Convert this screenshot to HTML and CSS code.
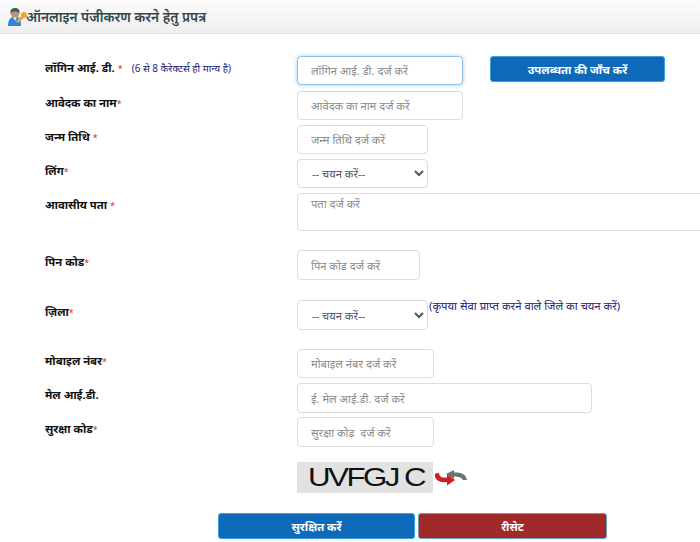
FILE: index.html

```html
<!DOCTYPE html>
<html lang="hi">
<head>
    <meta charset="UTF-8">
    <meta name="viewport" content="width=device-width, initial-scale=1.0">
    <title>ऑनलाइन पंजीकरण</title>
    <link rel="stylesheet" href="styles.css">
</head>
<body>

    <!-- Page heading -->
    <div class="page-head">
        <svg class="head-icon" width="19" height="18" viewBox="0 0 19 18">
            <path d="M0 18 C0 12 3 9 5 9 L9 9 C12 9 13 12 13 18 Z" fill="#2f86d6"/>
            <path d="M5 9 L7 13 L9 9 Z" fill="#e8eef4"/>
            <circle cx="7" cy="5" r="4.5" fill="#b99379"/>
            <path d="M2.5 5 C2 1 5 0 7 0 C10 0 12 2 11.5 5 C9 3 5 3 2.5 5 Z" fill="#4a5a5c"/>
            <circle cx="16" cy="7" r="3" fill="#eaa935"/>
            <path d="M14.5 7 L8 13 L10 15 L17 9 Z" fill="#eaa935"/>
        </svg>
        <span class="head-text">ऑनलाइन पंजीकरण करने हेतु प्रपत्र</span>
    </div>

    <form class="reg-form">
        <div class="row row-login">
            <label class="lbl">लॉगिन आई. डी. <span class="req">*</span><small class="hint">(6 से 8 कैरेक्टर्स ही मान्य है)</small></label>
            <input type="text" class="field field-focus w-166" placeholder="लॉगिन आई. डी. दर्ज करें">
            <button type="button" class="btn btn-check">उपलब्धता की जाँच करें</button>
        </div>
        <div class="row row-name">
            <label class="lbl">आवेदक का नाम<span class="req">*</span></label>
            <input type="text" class="field w-166" placeholder="आवेदक का नाम दर्ज करें">
        </div>
        <div class="row row-name">
            <label class="lbl">जन्म तिथि <span class="req">*</span></label>
            <input type="text" class="field w-131" placeholder="जन्म तिथि दर्ज करें">
        </div>
        <div class="row row-name">
            <label class="lbl">लिंग<span class="req">*</span></label>
            <select class="field select w-131"><option>-- चयन करें--</option></select>
        </div>
        <div class="row row-address">
            <label class="lbl">आवासीय पता <span class="req">*</span></label>
            <textarea class="field area" placeholder="पता दर्ज करें"></textarea>
        </div>
        <div class="row row-pin">
            <label class="lbl">पिन कोड<span class="req">*</span></label>
            <input type="text" class="field tall w-123" placeholder="पिन कोड दर्ज करें">
        </div>
        <div class="row row-district">
            <label class="lbl">ज़िला<span class="req">*</span></label>
            <select class="field select tall w-131"><option>-- चयन करें--</option></select>
            <span class="note">(कृपया सेवा प्राप्त करने वाले जिले का चयन करें)</span>
        </div>
        <div class="row row-mobile">
            <label class="lbl">मोबाइल नंबर<span class="req">*</span></label>
            <input type="text" class="field w-137" placeholder="मोबाइल नंबर दर्ज करें">
        </div>
        <div class="row row-mobile">
            <label class="lbl">मेल आई.डी.</label>
            <input type="text" class="field tall w-295" placeholder="ई. मेल आई.डी. दर्ज करें">
        </div>
        <div class="row row-captcha-input">
            <label class="lbl">सुरक्षा कोड<span class="req">*</span></label>
            <input type="text" class="field tall w-137" placeholder="सुरक्षा कोड  दर्ज करें">
        </div>
        <div class="captcha-row">
            <div class="captcha"><span class="captcha-text">UVFGJ C</span></div>
            <svg class="refresh" width="36" height="20" viewBox="0 0 36 20">
                <path d="M13 6 L21 2 L21 4.5 C28 4 33 6 34 12 L30 12 C29 9.5 25 8.5 21 8.5 L21 11 Z" fill="#707070"/>
                <path d="M22 12 L14 6.5 L14 9.5 C10 10 6.5 9.5 6 5 L2 5.5 C1 12 7 15 14 14 L14 17.5 Z" fill="#cc1f26"/>
            </svg>
        </div>
        <div class="actions">
            <button type="button" class="btn btn-save">सुरक्षित करें</button>
            <button type="button" class="btn btn-reset">रीसेट</button>
        </div>
    </form>

</body>
</html>
```

FILE: styles.css

```css
* {
    box-sizing: border-box;
    margin: 0;
    padding: 0;
    font-family: "Noto Sans", "Liberation Sans", sans-serif;
}

body {
    width: 700px;
    height: 542px;
    overflow: hidden;
    background: #fff;
    color: #222;
}

/* Heading bar */
.page-head {
    display: flex;
    align-items: center;
    height: 34px;
    padding-left: 8px;
    background: linear-gradient(#fbfbfb, #efefef);
    border-bottom: 1px solid #e2e2e2;
    font-size: 13.6px;
    font-weight: 600;
    color: #34474f;
}

.head-icon {
    flex: none;
    margin-top: 1px;
}

.head-text {
    margin-left: -1px;
}

/* Form rows */
.reg-form {
    padding-top: 22px;
}

.row {
    display: flex;
    align-items: flex-start;
    padding-left: 45px;
}

.row-login { height: 35px; }
.row-name { height: 34px; }
.row-address { height: 57px; }
.row-pin { height: 50px; }
.row-district { height: 49px; }
.row-mobile { height: 34px; }
.row-captcha-input { height: 45px; }

.lbl {
    flex: none;
    width: 252px;
    padding-top: 3px;
    font-size: 11.3px;
    line-height: 18px;
    font-weight: 700;
    color: #111;
    white-space: nowrap;
}

.req {
    font-size: 9px;
    color: #e02a2a;
    font-weight: 400;
}

.hint {
    margin-left: 9px;
    font-size: 10px;
    font-weight: 400;
    color: #22227e;
}

.field {
    height: 29px;
    padding: 0 13px;
    border: 1px solid #dcdcdc;
    border-radius: 4px;
    background: #fff;
    font-size: 11.2px;
    color: #555;
    outline: none;
}

.field::placeholder {
    color: #8a8a8a;
    opacity: 1;
}

.tall { height: 30px; }

.field-focus {
    border-color: #8dbde8;
    box-shadow: 0 0 4px rgba(102, 175, 233, 0.6);
}

.w-123 { width: 123px; }
.w-131 { width: 131px; }
.w-137 { width: 137px; }
.w-166 { width: 166px; }
.w-295 { width: 295px; }

.select {
    padding-left: 10px;
}

.area {
    flex: none;
    width: 420px;
    height: 38px;
    padding: 2px 13px;
    resize: none;
}

.note {
    margin: -2px 0 0 1px;
    font-size: 11.3px;
    color: #22227e;
    white-space: nowrap;
}

/* Captcha */
.captcha-row {
    display: flex;
    align-items: center;
    padding-left: 297px;
}

.captcha {
    width: 136px;
    height: 31px;
    overflow: hidden;
    padding-left: 11px;
    background: #e2e2e2;
    white-space: nowrap;
}

.captcha-text {
    display: inline-block;
    font-family: "Liberation Sans", sans-serif;
    font-size: 25px;
    line-height: 31px;
    letter-spacing: -2px;
    color: #111;
    transform: scaleX(1.25);
    transform-origin: left center;
}

.refresh {
    flex: none;
}

/* Buttons */
.btn {
    border: 1px solid #3fa0d8;
    border-radius: 3px;
    color: #fff;
    font-size: 11.3px;
    font-weight: 700;
    cursor: pointer;
}

.btn-check {
    width: 175px;
    height: 26px;
    margin-left: 27px;
    background: #0e6ab8;
}

.actions {
    display: flex;
    gap: 3px;
    margin-top: 20px;
    padding-left: 218px;
}

.btn-save {
    width: 197px;
    height: 26px;
    background: #0e6ab8;
}

.btn-reset {
    width: 189px;
    height: 26px;
    background: #a02a2a;
    border-color: #6f9fb5;
}
```
